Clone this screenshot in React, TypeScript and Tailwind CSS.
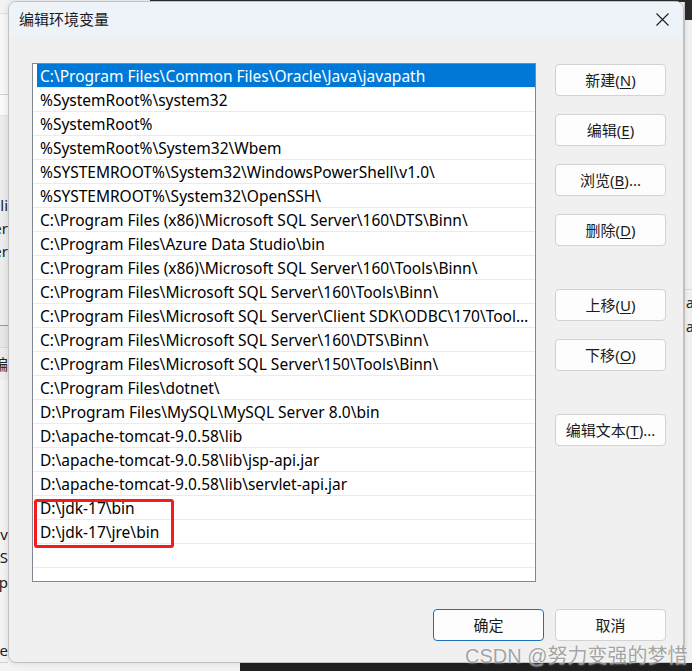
import { useState } from "react";

const paths = [
  "C:\\Program Files\\Common Files\\Oracle\\Java\\javapath",
  "%SystemRoot%\\system32",
  "%SystemRoot%",
  "%SystemRoot%\\System32\\Wbem",
  "%SYSTEMROOT%\\System32\\WindowsPowerShell\\v1.0\\",
  "%SYSTEMROOT%\\System32\\OpenSSH\\",
  "C:\\Program Files (x86)\\Microsoft SQL Server\\160\\DTS\\Binn\\",
  "C:\\Program Files\\Azure Data Studio\\bin",
  "C:\\Program Files (x86)\\Microsoft SQL Server\\160\\Tools\\Binn\\",
  "C:\\Program Files\\Microsoft SQL Server\\160\\Tools\\Binn\\",
  "C:\\Program Files\\Microsoft SQL Server\\Client SDK\\ODBC\\170\\Tools\\Binn\\",
  "C:\\Program Files\\Microsoft SQL Server\\160\\DTS\\Binn\\",
  "C:\\Program Files\\Microsoft SQL Server\\150\\Tools\\Binn\\",
  "C:\\Program Files\\dotnet\\",
  "D:\\Program Files\\MySQL\\MySQL Server 8.0\\bin",
  "D:\\apache-tomcat-9.0.58\\lib",
  "D:\\apache-tomcat-9.0.58\\lib\\jsp-api.jar",
  "D:\\apache-tomcat-9.0.58\\lib\\servlet-api.jar",
  "D:\\jdk-17\\bin",
  "D:\\jdk-17\\jre\\bin",
];

// label, mnemonic, suffix, top margin
const sideButtons = [
  { label: "新建", key: "N", tail: "", mt: "mt-0" },
  { label: "编辑", key: "E", tail: "", mt: "mt-[18px]" },
  { label: "浏览", key: "B", tail: "...", mt: "mt-[18px]" },
  { label: "删除", key: "D", tail: "", mt: "mt-[18px]" },
  { label: "上移", key: "U", tail: "", mt: "mt-[43px]" },
  { label: "下移", key: "O", tail: "", mt: "mt-[18px]" },
  { label: "编辑文本", key: "T", tail: "...", mt: "mt-[43px]" },
];

// bits of the window behind the dialog, peeking out on the left
const behindLeft = [
  { h: "h-[14px]", text: "", cls: "border-b border-[#e0e0e0] bg-[#f3f3f3]" },
  { h: "h-[81px]", text: "", cls: "border-b border-[#cfcfcf] bg-[#f7f7f7]" },
  { h: "h-[21px]", text: "", cls: "border-b border-[#e3e3e3] bg-[#f9f9f9]" },
  { h: "h-[78px]", text: "", cls: "bg-[#ececec]" },
  { h: "h-[23px]", text: "Publi", cls: "bg-[#ececec]" },
  { h: "h-[23px]", text: "Ser", cls: "bg-[#ececec]" },
  { h: "h-[23px]", text: "Ser", cls: "bg-[#ececec]" },
  { h: "h-[63px]", text: "", cls: "border-b border-[#9a9a9a] bg-[#ececec]" },
  { h: "h-[22px]", text: "", cls: "border-b border-[#d6d6d6] bg-[#e6e6e6]" },
  { h: "h-[32px]", text: "编", cls: "bg-[#ececec]" },
  { h: "h-[143px]", text: "", cls: "bg-[#f3f3f3]" },
  { h: "h-[23px]", text: "Jav", cls: "bg-[#f3f3f3]" },
  { h: "h-[23px]", text: "VS", cls: "bg-[#f3f3f3]" },
  { h: "h-[26px]", text: "p", cls: "bg-[#f3f3f3]" },
  { h: "h-[44px]", text: "", cls: "bg-[#f3f3f3]" },
  { h: "h-[24px]", text: "e", cls: "border-b border-[#d0d0d0] bg-[#f3f3f3]" },
];

const CloseIcon = () => (
  <svg width="13" height="13" viewBox="0 0 13 13" fill="none">
    <path d="M0.5 0.5L12.5 12.5M12.5 0.5L0.5 12.5" stroke="#1b1b1b" strokeWidth="1.1" />
  </svg>
);

const WinButton = ({
  label,
  k,
  tail,
  primary,
  className,
}: {
  label: string;
  k?: string;
  tail?: string;
  primary?: boolean;
  className?: string;
}) => (
  <button
    className={`flex h-[32px] w-[111px] items-center justify-center rounded-[4px] border bg-[#fdfdfd] text-[15px] text-[#1b1b1b] ${
      primary ? "border-[#1f6fc0]" : "border-[#d2d2d2]"
    } ${className ?? ""}`}
  >
    {label}
    {k && (
      <>
        (<span className="underline underline-offset-2">{k}</span>)
      </>
    )}
    {tail}
  </button>
);

const App = () => {
  const [selected, setSelected] = useState(0);

  return (
    <div className="relative h-[671px] w-[692px] overflow-hidden bg-[#f3f3f3] font-['Noto_Sans','Noto_Sans_CJK_SC',sans-serif] text-[15px] text-black">
      {/* desktop behind the dialog */}
      <div className="absolute left-0 top-0 flex w-[8px] flex-col overflow-hidden text-[15px] text-[#222]">
        {behindLeft.map((r, i) => (
          <div key={i} className={`flex items-center justify-end whitespace-nowrap ${r.h} ${r.cls}`}>
            {r.text}
          </div>
        ))}
      </div>
      <div className="absolute right-0 top-0 flex h-[671px] w-[8px] flex-col border-l border-[#c9c9c9] bg-[#f0f0f0] text-[14px] text-[#222]">
        <div className="h-[20px] bg-[#2b2b2b]" />
        <div className="h-[270px] border-b border-[#dadada]" />
        <div className="flex h-[24px] items-center pl-[1px]">a</div>
        <div className="flex h-[24px] items-center pl-[1px]">a</div>
      </div>
      <div className="absolute left-[150px] right-0 top-0 h-[2px] bg-[#2b2b2b]" />
      <div className="absolute bottom-0 left-[240px] right-0 h-[8px] bg-[#202020]" />

      {/* dialog window */}
      <div className="absolute left-[8px] top-[1px] flex w-[676px] flex-col overflow-hidden rounded-[8px] border border-[#c2c2c2] bg-[#f0f0f0] shadow-[0_0_6px_rgba(0,0,0,0.12)]">
        <div className="flex h-[35px] items-center justify-between bg-[#edf3f9] pl-[10px] pr-[14px]">
          <span className="text-[15px] text-[#1b1b1b]">编辑环境变量</span>
          <CloseIcon />
        </div>

        <div className="flex pl-[23px] pr-[17px] pt-[26px]">
          <div className="flex h-[519px] w-[504px] flex-col border border-[#828790] bg-white text-[15.5px]">
            {[...paths, ""].map((p, i) => (
              <div
                key={i}
                onClick={() => setSelected(i)}
                className={`flex h-[24px] shrink-0 items-center border-b border-[#ebebeb] pt-[2px] ${
                  i === selected ? "ml-[4px] bg-[#0078d7] pl-[3px] text-white" : "pl-[7px]"
                }`}
              >
                <span className="truncate pr-[3px]">{p}</span>
              </div>
            ))}
          </div>

          <div className="ml-[19px] flex w-[111px] flex-col pt-[1px]">
            {sideButtons.map((b) => (
              <WinButton key={b.key} label={b.label} k={b.key} tail={b.tail} className={b.mt} />
            ))}
          </div>
        </div>

        <div className="flex justify-end gap-[11px] pb-[21px] pr-[17px] pt-[27px]">
          <WinButton label="确定" primary />
          <WinButton label="取消" />
        </div>
      </div>

      {/* annotation box */}
      <div className="absolute left-[34px] top-[499px] h-[49px] w-[140px] rounded-[3px] border-[3px] border-[#f31b1b]" />

      {/* watermark */}
      <div className="absolute left-[465px] top-[641px] whitespace-nowrap font-['Liberation_Sans','Noto_Sans_CJK_SC',sans-serif] text-[20px] text-[#8c8c8c]/80 [text-shadow:0_0_2px_#ffffff]">
        CSDN @努力变强的梦惜
      </div>
    </div>
  );
};

export default App;
